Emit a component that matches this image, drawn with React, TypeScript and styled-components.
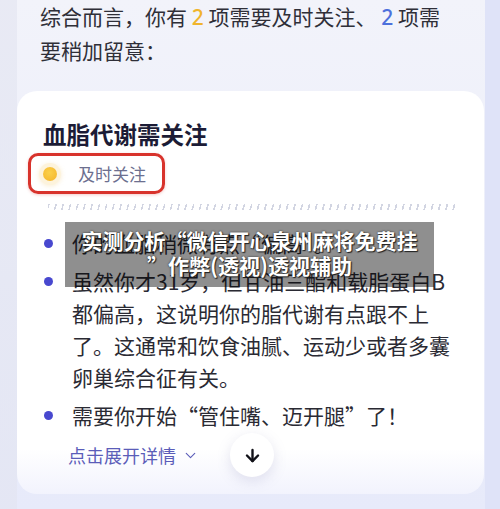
import React from 'react';
import styled, { createGlobalStyle } from 'styled-components';
import { ArrowDown, ChevronDown } from 'lucide-react';

const GlobalStyle = createGlobalStyle`
  html, body {
    margin: 0;
    padding: 0;
  }
  body {
    font-family: "Noto Sans CJK SC", "Noto Sans", sans-serif;
  }
`;

const bullets = [
  '你的血脂稍微有点“偏高”。',
  '虽然你才31岁，但甘油三酯和载脂蛋白B都偏高，这说明你的脂代谢有点跟不上了。这通常和饮食油腻、运动少或者多囊卵巢综合征有关。',
  '需要你开始“管住嘴、迈开腿”了！',
];

const App = (): JSX.Element => (
  <Page>
    <GlobalStyle />
    <Intro>
      综合而言，你有 <Count tone="warn">2</Count> 项需要及时关注、 <Count tone="info">2</Count> 项需
      <br />
      要稍加留意：
    </Intro>

    <Card>
      <Title>血脂代谢需关注</Title>
      <Badge>
        <Dot />
        <BadgeText>及时关注</BadgeText>
      </Badge>
      <Hatch />
      <List>
        {bullets.map((text, i) => (
          <Item key={i}>
            <Bullet />
            <span>{text}</span>
          </Item>
        ))}
      </List>
      <ExpandRow>
        <ExpandLink>
          点击展开详情
          <ChevronDown size={17} strokeWidth={1.6} />
        </ExpandLink>
        <RoundButton>
          <ArrowDown size={19} strokeWidth={3} />
        </RoundButton>
      </ExpandRow>
    </Card>

    <Watermark>
      实测分析“微信开心泉州麻将免费挂
      <br />
      ”作弊(透视)透视辅助
    </Watermark>
  </Page>
);

export default App;

const Page = styled.div`
  position: relative;
  width: 500px;
  height: 509px;
  overflow: hidden;
  background:
    linear-gradient(to right, rgba(226, 228, 240, 0.6) 0 17px, transparent 17px 485px, #dfe3f8 485px),
    linear-gradient(to bottom, #f2f3fa, #e7eafa);
`;

const Intro = styled.p`
  margin: 0;
  padding: 0 0 0 40px;
  font-size: 21px;
  line-height: 33px;
  color: #2f2f38;
  white-space: nowrap;
`;

const Count = styled.span<{ tone: 'warn' | 'info' }>`
  font-family: "Noto Sans", sans-serif;
  font-weight: 500;
  color: ${({ tone }) => (tone === 'warn' ? '#f0b42c' : '#4c70dc')};
`;

const Card = styled.div`
  margin: 24px 16px 0 17px;
  height: 403px;
  box-sizing: border-box;
  padding: 28px 26px 0 26px;
  border-radius: 20px;
  background: linear-gradient(to bottom, #ffffff calc(100% - 45px), #f2f3fd);
`;

const Title = styled.h2`
  margin: 0;
  font-size: 23.5px;
  line-height: 30px;
  font-weight: 700;
  color: #1c1c36;
`;

const Badge = styled.div`
  display: flex;
  align-items: center;
  width: 137px;
  height: 41px;
  box-sizing: border-box;
  margin: 4px 0 0 -15px;
  padding-left: 12px;
  border: 3px solid #d8332c;
  border-radius: 10px;
  box-shadow: 0 1px 3px rgba(216, 51, 44, 0.25);
`;

const Dot = styled.span`
  width: 14px;
  height: 14px;
  border-radius: 50%;
  background: radial-gradient(circle at 45% 40%, #fbd04a, #f4b32a);
  box-shadow: 0 0 0 4px #fdf3dc, 0 1px 5px 4px rgba(240, 200, 120, 0.35);
`;

const BadgeText = styled.span`
  margin-left: 21px;
  font-size: 17px;
  color: #6c6f8f;
`;

const Hatch = styled.div`
  height: 6px;
  margin: 10px 2px 0 5px;
  background: repeating-linear-gradient(105deg, #d2d5e2 0 1.6px, transparent 1.6px 7px);
`;

const List = styled.ul`
  list-style: none;
  margin: 17px 0 0 0;
  padding: 0;
  display: flex;
  flex-direction: column;
  gap: 6px;
`;

const Item = styled.li`
  display: flex;
  align-items: flex-start;
  font-size: 21px;
  line-height: 32px;
  color: #2a2a33;
  padding-right: 4px;
`;

const Bullet = styled.span`
  flex: none;
  width: 9px;
  height: 9px;
  margin: 12px 19px 0 1px;
  border-radius: 50%;
  background: #4848cf;
`;

const ExpandRow = styled.div`
  display: flex;
  align-items: center;
  margin-top: 2px;
  padding-left: 25px;
  height: 44px;
`;

const ExpandLink = styled.span`
  display: flex;
  align-items: center;
  gap: 6px;
  font-size: 18px;
  color: #5b5db9;
`;

const RoundButton = styled.button`
  display: flex;
  align-items: center;
  justify-content: center;
  width: 44px;
  height: 44px;
  margin-left: 31px;
  padding: 0;
  border: none;
  border-radius: 50%;
  background: #fff;
  color: #111118;
  box-shadow: 0 4px 14px rgba(120, 120, 170, 0.2);
`;

const Watermark = styled.div`
  position: absolute;
  left: 65px;
  top: 222px;
  width: 369px;
  height: 65px;
  box-sizing: border-box;
  padding-top: 6px;
  background: rgba(0, 0, 0, 0.44);
  text-align: center;
  font-size: 21px;
  line-height: 25px;
  font-weight: 700;
  color: #fff;
  text-shadow: 0 0 2px #222, 1px 1px 1px #222;
`;
